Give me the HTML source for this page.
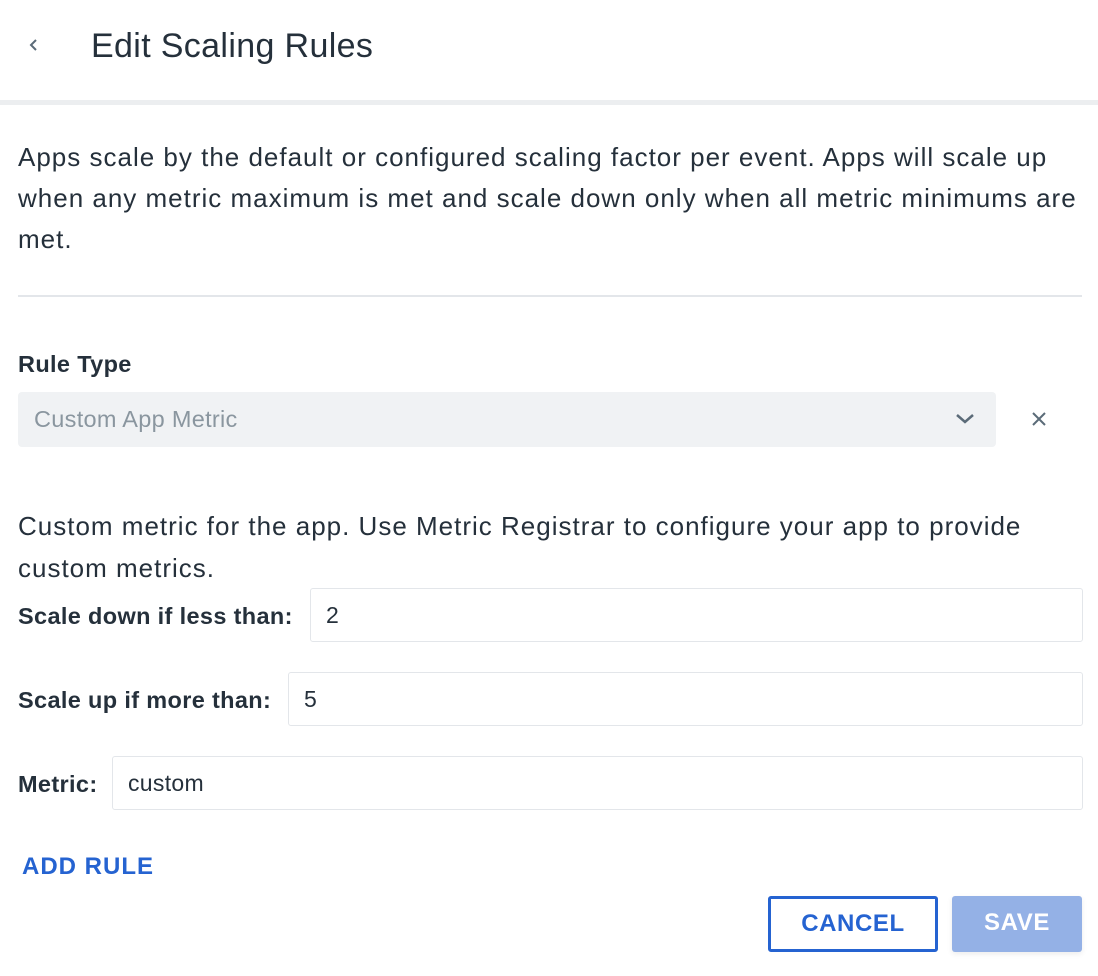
<!DOCTYPE html>
<html><head><style>
body{margin:0;width:1098px;height:976px;background:#fff;font-family:"Liberation Sans",sans-serif;color:#25303b;position:relative;overflow:hidden}
.a{position:absolute}
.inp{position:absolute;height:54px;border:1px solid #e3e6ea;border-radius:3px;box-sizing:border-box;font-size:23px;line-height:52px;padding-left:15px;color:#25303b;letter-spacing:0.3px}
.lbl{position:absolute;font-weight:bold;font-size:23.5px;line-height:26px;letter-spacing:0.35px}
</style></head><body>
<svg class="a" style="left:28px;top:38px" width="12" height="14" viewBox="0 0 12 14"><path d="M8 2 L3 7 L8 12" fill="none" stroke="#5b6b78" stroke-width="2"/></svg>
<div class="a" style="left:91px;top:26px;font-size:34px;line-height:40px;letter-spacing:0.35px">Edit Scaling Rules</div>
<div class="a" style="left:0;top:100px;width:1098px;height:5px;background:#eceef0"></div>
<div class="a" style="left:18px;top:137px;width:1075px;font-size:26px;line-height:41px;letter-spacing:1px">Apps scale by the default or configured scaling factor per event. Apps will scale up when any metric maximum is met and scale down only when all metric minimums are met.</div>
<div class="a" style="left:18px;top:295px;width:1064px;height:2px;background:#e3e6ea"></div>
<div class="lbl" style="left:18px;top:351px">Rule Type</div>
<div class="a" style="left:18px;top:392px;width:978px;height:55px;background:#f0f2f4;border-radius:4px"></div>
<div class="a" style="left:34px;top:405px;font-size:23.5px;line-height:28px;color:#8a969f;letter-spacing:0.3px">Custom App Metric</div>
<svg class="a" style="left:955px;top:412px" width="20" height="14" viewBox="0 0 20 14"><path d="M2 3 L10 10 L18 3" fill="none" stroke="#5b6b78" stroke-width="2.5"/></svg>
<svg class="a" style="left:1031px;top:411px" width="16" height="16" viewBox="0 0 16 16"><path d="M2 2 L14 14 M14 2 L2 14" stroke="#5b6b78" stroke-width="2"/></svg>
<div class="a" style="left:18px;top:505px;width:1075px;font-size:26px;line-height:42px;letter-spacing:1px">Custom metric for the app. Use Metric Registrar to configure your app to provide custom metrics.</div>
<div class="lbl" style="left:18px;top:603px">Scale down if less than:</div>
<div class="inp" style="left:310px;top:588px;width:773px">2</div>
<div class="lbl" style="left:18px;top:687px">Scale up if more than:</div>
<div class="inp" style="left:288px;top:672px;width:795px">5</div>
<div class="lbl" style="left:18px;top:771px">Metric:</div>
<div class="inp" style="left:112px;top:756px;width:971px">custom</div>
<div class="a" style="left:22px;top:853px;font-size:24px;font-weight:bold;color:#2563d1;letter-spacing:1px;line-height:28px">ADD RULE</div>
<div class="a" style="left:768px;top:896px;width:170px;height:56px;border:3px solid #2563d1;border-radius:3px;box-sizing:border-box;text-align:center;line-height:50px;font-size:24px;font-weight:bold;color:#2563d1;letter-spacing:0.6px">CANCEL</div>
<div class="a" style="left:952px;top:896px;width:130px;height:56px;background:#94b1e6;border-radius:3px;text-align:center;line-height:54px;font-size:24px;font-weight:bold;color:#fff;letter-spacing:0.6px;box-shadow:0 2px 6px rgba(0,0,0,.08)">SAVE</div>
</body></html>
